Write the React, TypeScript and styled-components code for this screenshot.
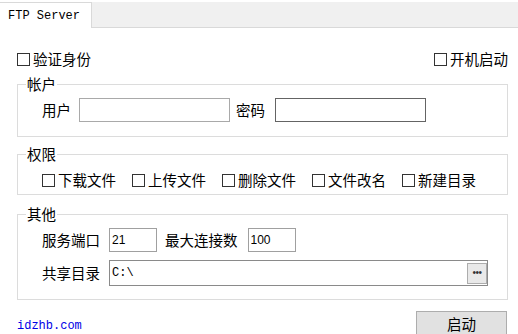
import React from "react";
import styled, { createGlobalStyle } from "styled-components";

const GlobalStyle = createGlobalStyle`
	html, body {
		margin: 0;
		padding: 0;
		background: #fff;
	}
	body {
		font-family: "Noto Sans CJK SC", "Microsoft YaHei", sans-serif;
		font-size: 14.5px;
		color: #000;
	}
`;

const Window = styled.div`
	width: 518px;
	height: 334px;
	overflow: hidden;
	background: #fff;
	display: flex;
	flex-direction: column;
`;

const TabStrip = styled.div`
	display: flex;
	height: 25px;
	margin-top: 2px;
	background: #f0f0f0;
	border-bottom: 1px solid #d9d9d9;
`;

const Tab = styled.div`
	box-sizing: border-box;
	width: 92px;
	height: 26px;
	margin-bottom: -1px;
	padding-left: 8px;
	display: flex;
	align-items: center;
	background: #fff;
	border-top: 1px solid #d9d9d9;
	border-right: 1px solid #d9d9d9;
	font-family: "Liberation Mono", monospace;
	font-size: 12px;
`;

const Body = styled.div`
	padding: 21px 10px 0 17px;
	display: flex;
	flex-direction: column;
`;

const TopRow = styled.div`
	display: flex;
	justify-content: space-between;
	align-items: center;
	height: 20px;
`;

const CheckLabel = styled.label`
	display: flex;
	align-items: center;
	line-height: 20px;
	white-space: nowrap;
	color: #000;
`;

const CheckBox = styled.span`
	box-sizing: border-box;
	width: 13px;
	height: 13px;
	margin-right: 3px;
	border: 1px solid #333;
	background: #fff;
`;

const Group = styled.fieldset<{ $top: number; $pt: number; $pb: number }>`
	margin: ${(p) => p.$top}px 0 0;
	padding: ${(p) => p.$pt}px 10px ${(p) => p.$pb}px 24px;
	border: 1px solid #dcdcdc;
	min-width: 0;
	display: flex;
	flex-direction: column;
	gap: 8px;
`;

const Legend = styled.legend`
	margin-left: -16px;
	padding: 0 1px;
	line-height: 16px;
`;

const FieldRow = styled.div`
	display: flex;
	align-items: center;
`;

const FieldLabel = styled.span<{ $ml?: number }>`
	margin-left: ${(p) => p.$ml ?? 0}px;
	line-height: 20px;
	white-space: nowrap;
`;

const TextBox = styled.input<{ $w: number; $ml: number; $border: string; $mono?: boolean }>`
	box-sizing: border-box;
	width: ${(p) => p.$w}px;
	height: 24px;
	margin: 0 0 0 ${(p) => p.$ml}px;
	padding: 0 2px;
	border: 1px solid ${(p) => p.$border};
	background: #fff;
	outline: none;
	font-family: ${(p) => (p.$mono ? '"Liberation Mono", monospace' : '"Liberation Sans", sans-serif')};
	font-size: 12px;
	color: #000;
`;

const PathBox = styled.div`
	box-sizing: border-box;
	width: 379px;
	height: 26px;
	margin-left: 9px;
	display: flex;
	align-items: center;
	border: 1px solid #8a8a8a;
	background: #fff;
	padding: 0 0 0 2px;
`;

const PathText = styled.span`
	flex: 1;
	font-family: "Liberation Mono", monospace;
	font-size: 12px;
`;

const BrowseButton = styled.div`
	box-sizing: border-box;
	width: 20px;
	height: 21px;
	display: flex;
	align-items: center;
	justify-content: center;
	background: #e9e9e9;
	border: 1px solid #adadad;
	font-family: "Liberation Sans", sans-serif;
	font-size: 10px;
	line-height: 10px;
	color: #333;
	letter-spacing: -0.5px;
`;

const PermRow = styled.div`
	display: flex;
	gap: 16px;
	height: 20px;
	align-items: center;
`;

const BottomRow = styled.div`
	margin-top: 11px;
	display: flex;
	justify-content: space-between;
	align-items: flex-start;
`;

const Link = styled.span`
	font-family: "Liberation Mono", monospace;
	font-size: 12px;
	line-height: 14px;
	margin-top: 8px;
	color: #0000e6;
`;

const StartButton = styled.div`
	box-sizing: border-box;
	width: 91px;
	height: 25px;
	margin-right: 1px;
	display: flex;
	align-items: center;
	justify-content: center;
	background: #e1e1e1;
	border: 1px solid #adadad;
`;

function Check({ label }: { label: string }) {
	return (
		<CheckLabel>
			<CheckBox />
			{label}
		</CheckLabel>
	);
}

const perms = ["下载文件", "上传文件", "删除文件", "文件改名", "新建目录"];

export default function App() {
	return (
		<Window>
			<GlobalStyle />
			<TabStrip>
				<Tab>FTP Server</Tab>
			</TabStrip>
			<Body>
				<TopRow>
					<Check label="验证身份" />
					<Check label="开机启动" />
				</TopRow>

				<Group $top={7} $pt={6} $pb={14}>
					<Legend>帐户</Legend>
					<FieldRow>
						<FieldLabel>用户</FieldLabel>
						<TextBox $w={151} $ml={8} $border="#a9a9a9" readOnly />
						<FieldLabel $ml={6}>密码</FieldLabel>
						<TextBox $w={151} $ml={10} $border="#646464" readOnly />
					</FieldRow>
				</Group>

				<Group $top={9} $pt={8} $pb={4}>
					<Legend>权限</Legend>
					<PermRow>
						{perms.map((p) => (
							<Check key={p} label={p} />
						))}
					</PermRow>
				</Group>

				<Group $top={11} $pt={6} $pb={13}>
					<Legend>其他</Legend>
					<FieldRow>
						<FieldLabel>服务端口</FieldLabel>
						<TextBox $w={48} $ml={9} $border="#a0a0a0" defaultValue="21" readOnly />
						<FieldLabel $ml={8}>最大连接数</FieldLabel>
						<TextBox $w={48} $ml={10} $border="#a0a0a0" defaultValue="100" readOnly />
					</FieldRow>
					<FieldRow>
						<FieldLabel>共享目录</FieldLabel>
						<PathBox>
							<PathText>C:\</PathText>
							<BrowseButton>•••</BrowseButton>
						</PathBox>
					</FieldRow>
				</Group>

				<BottomRow>
					<Link>idzhb.com</Link>
					<StartButton>启动</StartButton>
				</BottomRow>
			</Body>
		</Window>
	);
}
